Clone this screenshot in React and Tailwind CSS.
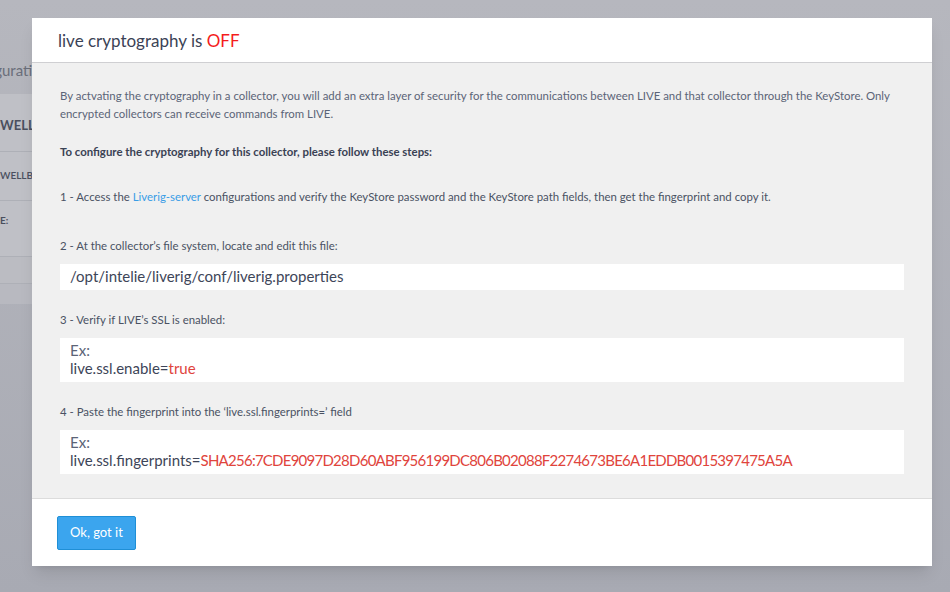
import React from 'react';

const font = { fontFamily: 'Lato, "Open Sans", sans-serif' };

const CodeBox = ({ children }) => (
  <div className="bg-white px-[10px] pt-[3px] pb-[5px] text-[15px] leading-[18px] text-[#3d4558]">{children}</div>
);

export default function App() {
  return (
    <div className="relative h-[592px] w-[950px] overflow-hidden bg-gradient-to-b from-[#b6b7be] to-[#a8aab3]" style={font}>
      {/* dimmed page behind */}
      <div className="pt-[59px]">
        <div className="ml-[-41px] text-[15px] text-[#6a6e7a]">Configuration</div>
        <div className="mt-[12px] h-[210px] w-[40px] bg-[#bfc0c6] font-bold text-[#4a4f5e]">
          <div className="flex h-[58px] items-center border-b border-[#aeb0b7] pt-[8px] text-[13px]">WELL</div>
          <div className="flex h-[49px] items-center border-b border-[#aeb0b7] text-[10px] font-semibold">WELLB</div>
          <div className="h-[56px] border-b border-[#aeb0b7] pt-[12px] text-[10px]">E:</div>
          <div className="h-[27px] border-b border-[#aeb0b7] bg-[#bbbcc2]"></div>
          <div className="h-[20px] bg-[#b8b9c0]"></div>
        </div>
      </div>

      {/* modal */}
      <div className="absolute left-[32px] top-[18px] w-[900px] bg-white shadow-lg">
        <div className="flex h-[45px] items-center border-b border-[#cfcfd2] px-[26px] pt-[2px] text-[17px] text-[#3b4256]">
          live cryptography is&nbsp;<span className="text-[#f41c1c]">OFF</span>
        </div>
        <div className="bg-[#f0f0f0] px-[28px] pt-[24px] pb-[24px] text-[11.4px] leading-[18px] text-[#5b6477]">
          <p>
            By actvating the cryptography in a collector, you will add an extra layer of security for the communications between LIVE and that collector through the KeyStore. Only encrypted collectors can receive commands from LIVE.
          </p>
          <p className="mt-[20px] font-bold text-[#3a4254]">To configure the cryptography for this collector, please follow these steps:</p>
          <p className="mt-[27px] text-[#4a5263]">
            1 - Access the <span className="text-[#3a9de6]">Liverig-server</span> configurations and verify the KeyStore password and the KeyStore path fields, then get the fingerprint and copy it.
          </p>
          <p className="mt-[31px] text-[#4a5263]">2 - At the collector’s file system, locate and edit this file:</p>
          <div className="mt-[9px]">
            <CodeBox>/opt/intelie/liverig/conf/liverig.properties</CodeBox>
          </div>
          <p className="mt-[21px] text-[#4a5263]">3 - Verify if LIVE’s SSL is enabled:</p>
          <div className="mt-[9px]">
            <CodeBox>
              <div className="text-[#5b6477]">Ex:</div>
              <div>live.ssl.enable=<span className="text-[#e0443c]">true</span></div>
            </CodeBox>
          </div>
          <p className="mt-[21px] text-[#4a5263]">4 - Paste the fingerprint into the ‘live.ssl.fingerprints=’ field</p>
          <div className="mt-[9px]">
            <CodeBox>
              <div className="text-[#5b6477]">Ex:</div>
              <div>live.ssl.fingerprints=<span className="tracking-[-0.75px] text-[#e0443c]">SHA256:7CDE9097D28D60ABF956199DC806B02088F2274673BE6A1EDDB0015397475A5A</span></div>
            </CodeBox>
          </div>
        </div>
        <div className="border-t border-[#dcdcdc] px-[25px] pt-[17px] pb-[16px]">
          <button className="h-[34px] rounded-[2px] border border-[#1f8fd6] bg-[#3ba5ee] px-[12px] text-[13px] text-white">Ok, got it</button>
        </div>
      </div>
    </div>
  );
}
